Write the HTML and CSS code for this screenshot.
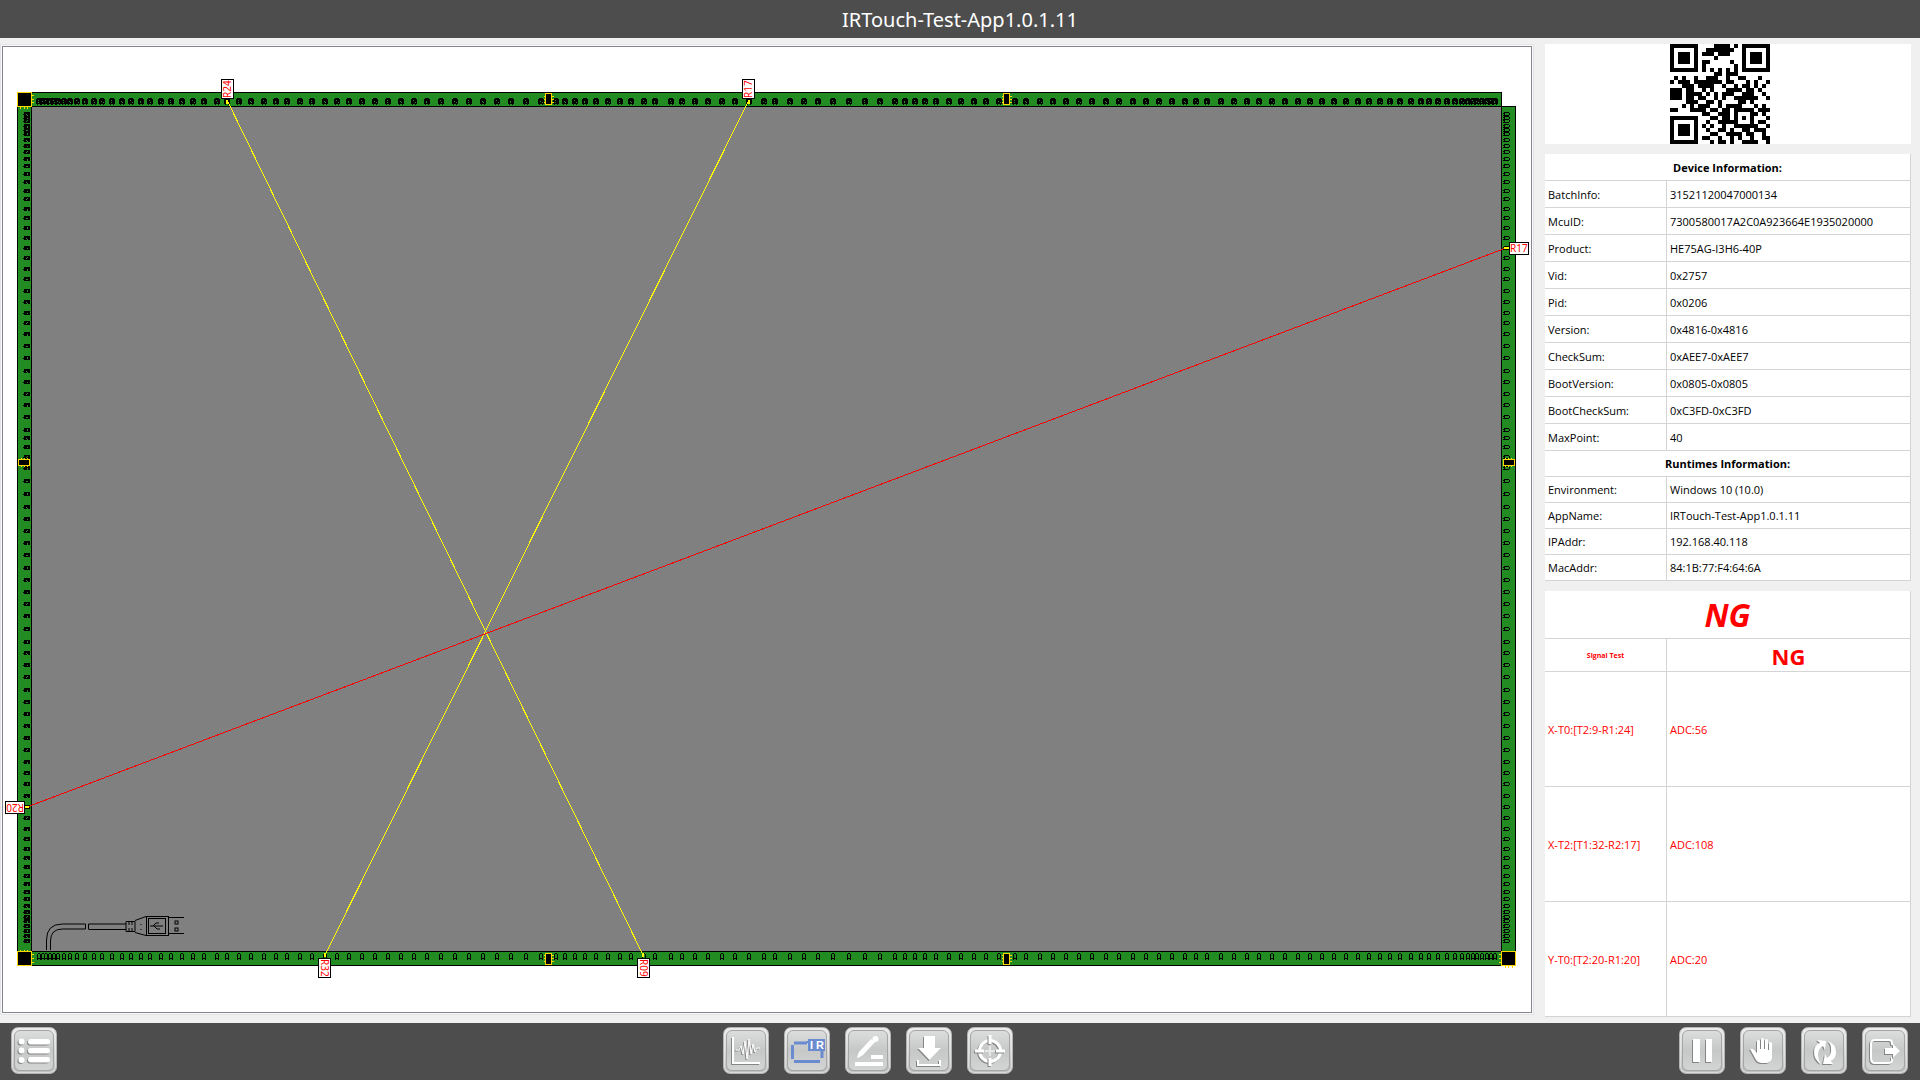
FILE: index.html
```
<!DOCTYPE html>
<html lang="en">
<head>
<meta charset="UTF-8">
<title>IRTouch-Test-App1.0.1.11</title>
<link rel="stylesheet" href="styles.css">
</head>
<body>
<header class="titlebar">
	<h1>IRTouch-Test-App1.0.1.11</h1>
</header>

<main class="content">
	<section class="view">
		<svg class="board" viewBox="3 47 1528 965">
			<rect class="screen" x="32" y="106" width="1469" height="845"/>
			<!-- four boards -->
			<g class="pcb">
				<rect x="17.5" y="92.5" width="1484" height="14"/>
				<rect x="17.5" y="106.5" width="14" height="845"/>
				<rect x="1501.5" y="106.5" width="14" height="845"/>
				<rect x="17.5" y="951.5" width="1498" height="14"/>
			</g>
			<g id="leds"></g>

			<!-- corner connectors -->
			<g class="chip">
				<path d="M32 95.500h2M32 99.500h2M32 102.500h2M20.500 107v2M24.500 107v2M27.500 107v2"/>
				<path d="M32 954.500h2M32 958.500h2M32 962.500h2M20.500 950v2M24.500 950v2M27.500 950v2"/>
				<path d="M1499 954.500h2M1499 958.500h2M1499 962.500h2M1505.500 966v2M1508.500 966v2M1512.500 966v2"/>
				<rect x="17.5" y="92.5" width="14" height="14"/>
				<rect x="17.5" y="951.5" width="14" height="14"/>
				<rect x="1501.5" y="951.5" width="14" height="14"/>
			</g>
			<!-- board chips -->
			<g class="chip">
				<path d="M544 96.500h10M544 99.500h10M544 102.500h10M1002 96.500h10M1002 99.500h10M1002 102.500h10"/>
				<path d="M544 955.500h10M544 958.500h10M544 961.500h10M1002 955.500h10M1002 958.500h10M1002 961.500h10"/>
				<path d="M21.500 458v9M24.500 458v9M27.500 458v9M1505.500 458v9M1508.500 458v9M1511.500 458v9"/>
				<rect x="545.5" y="93.500" width="6" height="11"/>
				<rect x="1003.5" y="93.500" width="6" height="11"/>
				<rect x="545.5" y="953.500" width="6" height="11"/>
				<rect x="1003.5" y="953.500" width="6" height="11"/>
				<rect x="18.5" y="459.500" width="11" height="6"/>
				<rect x="1503.5" y="459.500" width="11" height="6"/>
			</g>

			<!-- usb cable -->
			<g class="cable">
				<path d="M46.500 950v-10q0-16 16-16H85.500v5M50.500 950v-9q0-12 12-12H85.500M88.500 929v-5H126M88.500 929.500H126"/>
				<path d="M126 921.500h9v10h-9zM129 922v3M132 922v3M129 928v3M132 928v3M135 920.500l11-4M135 932.500l11 3M141 924v1M141 929v1"/>
				<rect x="146.500" y="916.500" width="22" height="19"/>
				<rect x="148.500" y="918.500" width="17" height="15"/>
				<path d="M169 917.500h15M169 933.500h15M150 926h13M153 926l3-3h3M154 926l3 3h3"/>
				<rect x="175" y="921" width="3" height="3"/>
				<rect x="175" y="928" width="3" height="3"/>
			</g>

			<!-- blocked beams -->
			<g class="beams">
				<path class="beam-x" d="M227 100L643 955M749 100L325 955"/>
				<path class="beam-y" d="M27 807L1506 248"/>
				<path class="lit" d="M227 100v4M749 100v4M325 953v4M643 953v4M24 807h5M1504 248h5"/>
			</g>
			<g class="tag">
				<rect x="221.500" y="79.500" width="12" height="19"/>
				<text transform="translate(231 98) rotate(-90)">R24</text>
				<rect x="742.500" y="79.500" width="12" height="19"/>
				<text transform="translate(752 98) rotate(-90)">R17</text>
				<rect x="318.500" y="958.500" width="12" height="19"/>
				<text transform="translate(321 959) rotate(90)">R32</text>
				<rect x="637.500" y="958.500" width="12" height="19"/>
				<text transform="translate(640 959) rotate(90)">R09</text>
				<rect x="5.500" y="801.500" width="19" height="12"/>
				<text transform="translate(24 804) rotate(180)">R20</text>
				<rect x="1509.500" y="242.500" width="19" height="12"/>
				<text transform="translate(1510 252)">R17</text>
			</g>
		</svg>
	</section>

	<aside class="sidebar">
		<div class="qr">
			<svg id="qrcode" viewBox="0 0 25 25" role="img" aria-label="QR code"></svg>
		</div>

		<table class="info">
			<colgroup><col class="name-col"><col></colgroup>
			<tbody>
				<tr><th colspan="2">Device Information:</th></tr>
				<tr><td>BatchInfo:</td><td>31521120047000134</td></tr>
				<tr><td>McuID:</td><td>7300580017A2C0A923664E1935020000</td></tr>
				<tr><td>Product:</td><td>HE75AG-I3H6-40P</td></tr>
				<tr><td>Vid:</td><td>0x2757</td></tr>
				<tr><td>Pid:</td><td>0x0206</td></tr>
				<tr><td>Version:</td><td>0x4816-0x4816</td></tr>
				<tr><td>CheckSum:</td><td>0xAEE7-0xAEE7</td></tr>
				<tr><td>BootVersion:</td><td>0x0805-0x0805</td></tr>
				<tr><td>BootCheckSum:</td><td>0xC3FD-0xC3FD</td></tr>
				<tr><td>MaxPoint:</td><td>40</td></tr>
			</tbody>
			<tbody class="runtimes">
				<tr><th colspan="2">Runtimes Information:</th></tr>
				<tr><td>Environment:</td><td>Windows 10 (10.0)</td></tr>
				<tr><td>AppName:</td><td>IRTouch-Test-App1.0.1.11</td></tr>
				<tr><td>IPAddr:</td><td>192.168.40.118</td></tr>
				<tr><td>MacAddr:</td><td>84:1B:77:F4:64:6A</td></tr>
			</tbody>
		</table>

		<table class="info result">
			<colgroup><col class="name-col"><col></colgroup>
			<tbody>
				<tr class="total"><th colspan="2">NG</th></tr>
				<tr class="test"><th class="test-name">Signal Test</th><th>NG</th></tr>
				<tr><td>X-T0:[T2:9-R1:24]</td><td>ADC:56</td></tr>
				<tr><td>X-T2:[T1:32-R2:17]</td><td>ADC:108</td></tr>
				<tr><td>Y-T0:[T2:20-R1:20]</td><td>ADC:20</td></tr>
			</tbody>
		</table>
	</aside>
</main>

<footer class="toolbar">
	<div class="group">
		<button type="button" class="tool" aria-label="Menu">
			<svg viewBox="0 0 46 47"><g class="fill"><circle cx="10.500" cy="14.500" r="3"/><circle cx="10.500" cy="23.500" r="3"/><circle cx="10.500" cy="33" r="3"/><rect x="17" y="12" width="22" height="5.500" rx="2.700"/><rect x="17" y="21" width="22" height="5.500" rx="2.700"/><rect x="17" y="30" width="22" height="5.500" rx="2.700"/></g></svg>
		</button>
	</div>
	<div class="group">
		<button type="button" class="tool" aria-label="Signal">
			<svg viewBox="0 0 46 47"><path class="line" d="M10 10v26h27"/><path class="line thin" d="M13 23h3l2-4 2 8 2-13 2 18 2-20 2 15 2-10 2 8 2-4h3"/></svg>
		</button>
		<button type="button" class="tool" aria-label="IR view">
			<svg viewBox="0 0 46 47"><path class="ir" d="M10 16h13M24 16V14M8.500 18v14M10 34.500h26M38 31v-8"/><rect class="ir-box" x="24" y="12" width="17" height="12"/><text class="ir-text" x="26" y="22">I</text><text class="ir-text" x="32" y="22">R</text></svg>
		</button>
		<button type="button" class="tool" aria-label="Draw">
			<svg viewBox="0 0 46 47"><g class="fill flat"><path d="M12 30l2-5 12-13 4 3-12 13-5 3z"/><circle cx="30.500" cy="12" r="3"/><rect x="26" y="28" width="12" height="4"/><rect x="10" y="35" width="28" height="4"/></g></svg>
		</button>
		<button type="button" class="tool" aria-label="Download">
			<svg viewBox="0 0 46 47"><path class="fill" d="M18 9h11v12h6L23.500 33 12 21h6z"/><path class="line" d="M12 33v5h22v-5"/></svg>
		</button>
		<button type="button" class="tool" aria-label="Calibrate">
			<svg viewBox="0 0 46 47"><circle class="line wide" cx="23" cy="24" r="10.500"/><path class="line wide" d="M23 8v9M23 31v8M8 24h9M29 24h9"/><path class="line pale" d="M23 19v10M18 24h10"/></svg>
		</button>
	</div>
	<div class="group">
		<button type="button" class="tool" aria-label="Pause">
			<svg viewBox="0 0 46 47"><path class="fill" d="M14 12h7v23h-7zM27 12h6v23h-6z"/></svg>
		</button>
		<button type="button" class="tool" aria-label="Touch">
			<svg viewBox="0 0 46 47"><path class="fill" d="M10 22q2-1 4 1l3 3V14q1.500-2 3 0v8h1V12q1.500-2 3 0v10h1V13q1.500-2 3 0v10h1v-7q1.500-2 3 0v14q0 5-5 6h-6q-3 0-5-3z"/></svg>
		</button>
		<button type="button" class="tool" aria-label="Restart">
			<svg viewBox="0 0 46 47"><path class="fill" d="M20 37q-7-4-7-12 0-7 6-9l-3-3 9 1-1 9-2-4q-5 3-5 9 0 5 3 9zM27 14q8 3 8 12 0 5-5 8l2 3-10 0 2-10 2 4q5-4 4-9 0-5-3-8z"/></svg>
		</button>
		<button type="button" class="tool" aria-label="Exit">
			<svg viewBox="0 0 46 47"><path class="line" d="M30 18v-2q0-3-3-3H13q-4 0-4 4v14q0 5 4 5h13q4 0 4-3v-3"/><path class="fill" d="M23 21h8v-4l7 7-7 7v-4h-8z"/></svg>
		</button>
	</div>
</footer>

<script>
	//LED positions on the horizontal and vertical boards
	let ledX = [39, 43, 46, 50, 54, 58, 64, 70, 77, 85, 94, 102, 112, 122, 131, 141, 150, 161, 171, 182, 193, 204,
		217, 227, 239, 251, 264, 276, 287, 300, 312, 325, 337, 349, 362, 375, 388, 401, 414, 427, 441, 455, 469,
		483, 497, 511, 526, 541, 556, 565, 575, 585, 596, 608, 620, 631, 644, 655, 671, 682, 695, 708, 722, 735,
		749, 764, 775, 790, 804, 818, 833, 849, 865, 880, 895, 905, 915, 925, 936, 949, 961, 974, 986, 999, 1015,
		1026, 1040, 1053, 1066, 1079, 1092, 1106, 1119, 1133, 1146, 1159, 1172, 1185, 1196, 1207, 1221, 1234,
		1247, 1259, 1272, 1285, 1298, 1310, 1322, 1334, 1346, 1358, 1369, 1380, 1390, 1400, 1411, 1421, 1429,
		1438, 1447, 1455, 1462, 1468, 1473, 1477, 1482, 1487, 1491, 1495];
	let ledY = [114, 118, 121, 126, 130, 134, 140, 146, 152, 159, 166, 174, 182, 191, 199, 209, 218, 228, 238,
		248, 258, 269, 279, 291, 302, 313, 323, 334, 346, 358, 371, 382, 394, 405, 417, 430, 438, 447, 457, 468,
		481, 494, 507, 519, 531, 543, 555, 568, 580, 592, 604, 616, 629, 642, 653, 665, 677, 690, 702, 714, 726,
		738, 750, 762, 773, 784, 796, 807, 818, 829, 839, 849, 858, 867, 876, 884, 892, 899, 906, 912, 917, 921,
		926, 931, 936, 941];

	let leds = '';
	//receivers are dark, emitters are outlined
	ledX.forEach(function(x, i) {
		leds += '<path class="led-dark" d="M' + (x - 2) + ' 98h4v1h1v5h-1v1h-1v-1h-2v1h-1v-1h-1v-5h1z"/>';
		leds += '<path class="led-dot" d="M' + (x - 1) + ' ' + (100 + i % 2) + 'h1v1h-1zM' + (x + i % 3 - 1) + ' 102h1v1h-1z"/>';
		leds += '<path class="led-line" d="M' + (x - 0.5) + ' 953.5h1l1 1v4h-3v-4zM' + (x - 1.5) + ' 958v2M' + (x + 1.5) + ' 958v2"/>';
	});
	ledY.forEach(function(y, i) {
		leds += '<path class="led-dark" d="M24 ' + (y - 2) + 'h6v4h-6v-1h-1v-1h1v-1h-1z"/>';
		leds += '<path class="led-dot" d="M' + (26 + i % 2) + ' ' + y + 'h1v1h-1zM27 ' + (y - i % 3 + 1) + 'h1v1h-1z"/>';
		leds += '<path class="led-line" d="M1504.5 ' + (y - 1.5) + 'h4l1 1v1l-1 1h-4zM1503 ' + (y - 0.5) + 'h1M1503 ' + (y + 1.5) + 'h1"/>';
	});
	document.getElementById('leds').innerHTML = leds;

	//QR modules, one string per row
	let qr = [
		'1111111000011110101111111',
		'1000001001111111001000001',
		'1011101011101110001011101',
		'1011101000010000001011101',
		'1011101011000001001011101',
		'1000001010000000101000001',
		'1111111010101010101111111',
		'0000000000011011100000000',
		'0101001001110010011000100',
		'1011101111111011000101001',
		'0001110111100100101101010',
		'1110110010100011110110100',
		'1110111101010111001110010',
		'1110110110010100111111001',
		'0000111001101000011010000',
		'0001010111001011110001010',
		'1100011110110110111110111',
		'0000000011001110100011010',
		'1111111000110110101010001',
		'1000001001001111100010110',
		'1011101010100100111111001',
		'1011101001001101001101110',
		'1011101000110011110110010',
		'1000001011001001010010011',
		'1111111000101101001111001'];
	let cells = '';
	for (let y = 0; y < qr.length; y++) {
		for (let x = 0; x < qr[y].length; x++) {
			if (qr[y].charAt(x) == '1') {
				cells += 'M' + x + ' ' + y + 'h1v1h-1z';
			}
		}
	}
	document.getElementById('qrcode').innerHTML = '<path d="' + cells + '"/>';
</script>
</body>
</html>
```

FILE: styles.css
```
* {
	margin: 0;
	padding: 0;
	box-sizing: border-box;
}

body {
	display: flex;
	flex-direction: column;
	min-height: 100vh;
	background: #f0f0f0;
	color: #000;
	font-family: "Open Sans", "Liberation Sans", sans-serif;
	font-size: 11px;
}

.titlebar {
	height: 38px;
	background: #4d4d4d;
	color: #fff;
	text-align: center;
}

.titlebar h1 {
	font-family: "Noto Sans", sans-serif;
	font-size: 20px;
	font-weight: normal;
	line-height: 40px;
}

.content {
	flex: 1;
	display: flex;
	gap: 13px;
	padding: 6px 9px 6px 2px;
}

.view {
	flex: 1;
	min-width: 0;
	margin: 2px 0 4px;
	border: 1px solid #828790;
	background: #fff;
	box-shadow: 0 0 0 1px #f8f8f8, 0 0 0 2px #e5e5e5;
}

.board {
	display: block;
	width: 100%;
	height: auto;
	shape-rendering: crispEdges;
}

.screen {
	fill: #808080;
}

.pcb rect {
	fill: #228b22;
	stroke: #000;
}

.chip rect {
	fill: #000;
	stroke: #ffd700;
}

.chip path {
	stroke: #ffd700;
}

.led-dark {
	fill: #000;
}

.led-dot {
	fill: #228b22;
}

.led-line {
	fill: none;
	stroke: #000;
}

.cable {
	fill: none;
	stroke: #000;
	shape-rendering: auto;
}

.beams path {
	fill: none;
}

.beam-x {
	stroke: #ff0;
}

.beam-y {
	stroke: #f00;
}

.beams .lit {
	stroke: #ff0;
	stroke-width: 2;
}

.tag rect {
	fill: #fff;
	stroke: #000;
}

.tag text {
	fill: #f00;
	font-family: "Noto Sans", sans-serif;
	font-size: 10px;
}

.sidebar {
	flex: 0 0 366px;
	display: flex;
	flex-direction: column;
	gap: 10px;
}

.qr {
	padding-left: 125px;
	background: #fff;
}

.qr svg {
	display: block;
	width: 100px;
	height: 100px;
	shape-rendering: crispEdges;
}

.info {
	width: 100%;
	border-spacing: 0;
	table-layout: fixed;
	background: #fff;
}

.name-col {
	width: 122px;
}

.info tr {
	height: 27px;
}

.info .runtimes tr {
	height: 26px;
}

.info th, .info td {
	border-right: 1px solid #d4d4d4;
	border-bottom: 1px solid #d4d4d4;
	line-height: 16px;
}

.info td, .info th {
	padding: 1px 3px 0;
}

.info .runtimes td, .info .runtimes th {
	padding-top: 0;
}

.result {
	color: #f00;
}

.info.result tr {
	height: 115px;
}

.info.result .total {
	height: 48px;
}

.info.result .test {
	height: 33px;
}

.total th {
	font-size: 32px;
	font-style: italic;
}

.test th {
	font-size: 22px;
}

.test .test-name {
	font-size: 7px;
}

.toolbar {
	display: flex;
	justify-content: space-between;
	height: 57px;
	padding: 4px 12px 0 11px;
	background: #4d4d4d;
}

.group {
	display: flex;
	gap: 15px;
}

.tool {
	position: relative;
	width: 46px;
	height: 47px;
	border: 1px solid #b4b4b4;
	border-radius: 7px;
	background: linear-gradient(#f0f0f0, #d2d3d2 50%, #b0b0b0);
	box-shadow: inset 0 0 2px 1px #e8e8e8;
	cursor: pointer;
}

/* inner bevel */
.tool::before {
	content: "";
	position: absolute;
	inset: 2px;
	border: 1px solid #a4a6a5;
	border-radius: 6px;
	background: linear-gradient(#dcdedd, #c5c8c6 50%, #d3d5d4);
}

.tool svg {
	position: absolute;
	inset: -1px;
	width: 46px;
	height: 47px;
}

.fill {
	fill: #fff;
	filter: drop-shadow(-1px 1px 0 #858585);
}

.fill.flat {
	filter: none;
}

.line {
	fill: none;
	stroke: #fff;
	stroke-width: 2;
	filter: drop-shadow(-1px 1px 0 #858585);
}

.line.thin {
	stroke-width: 1;
}

.line.wide {
	stroke-width: 3;
}

.line.pale {
	stroke: #e8e8e8;
	filter: none;
}

.ir {
	fill: none;
	stroke: #6a8bd0;
	stroke-width: 3;
}

.ir-box {
	fill: #6a8bd0;
}

.ir-text {
	fill: #fff;
	font-size: 11px;
	font-weight: bold;
}
```
